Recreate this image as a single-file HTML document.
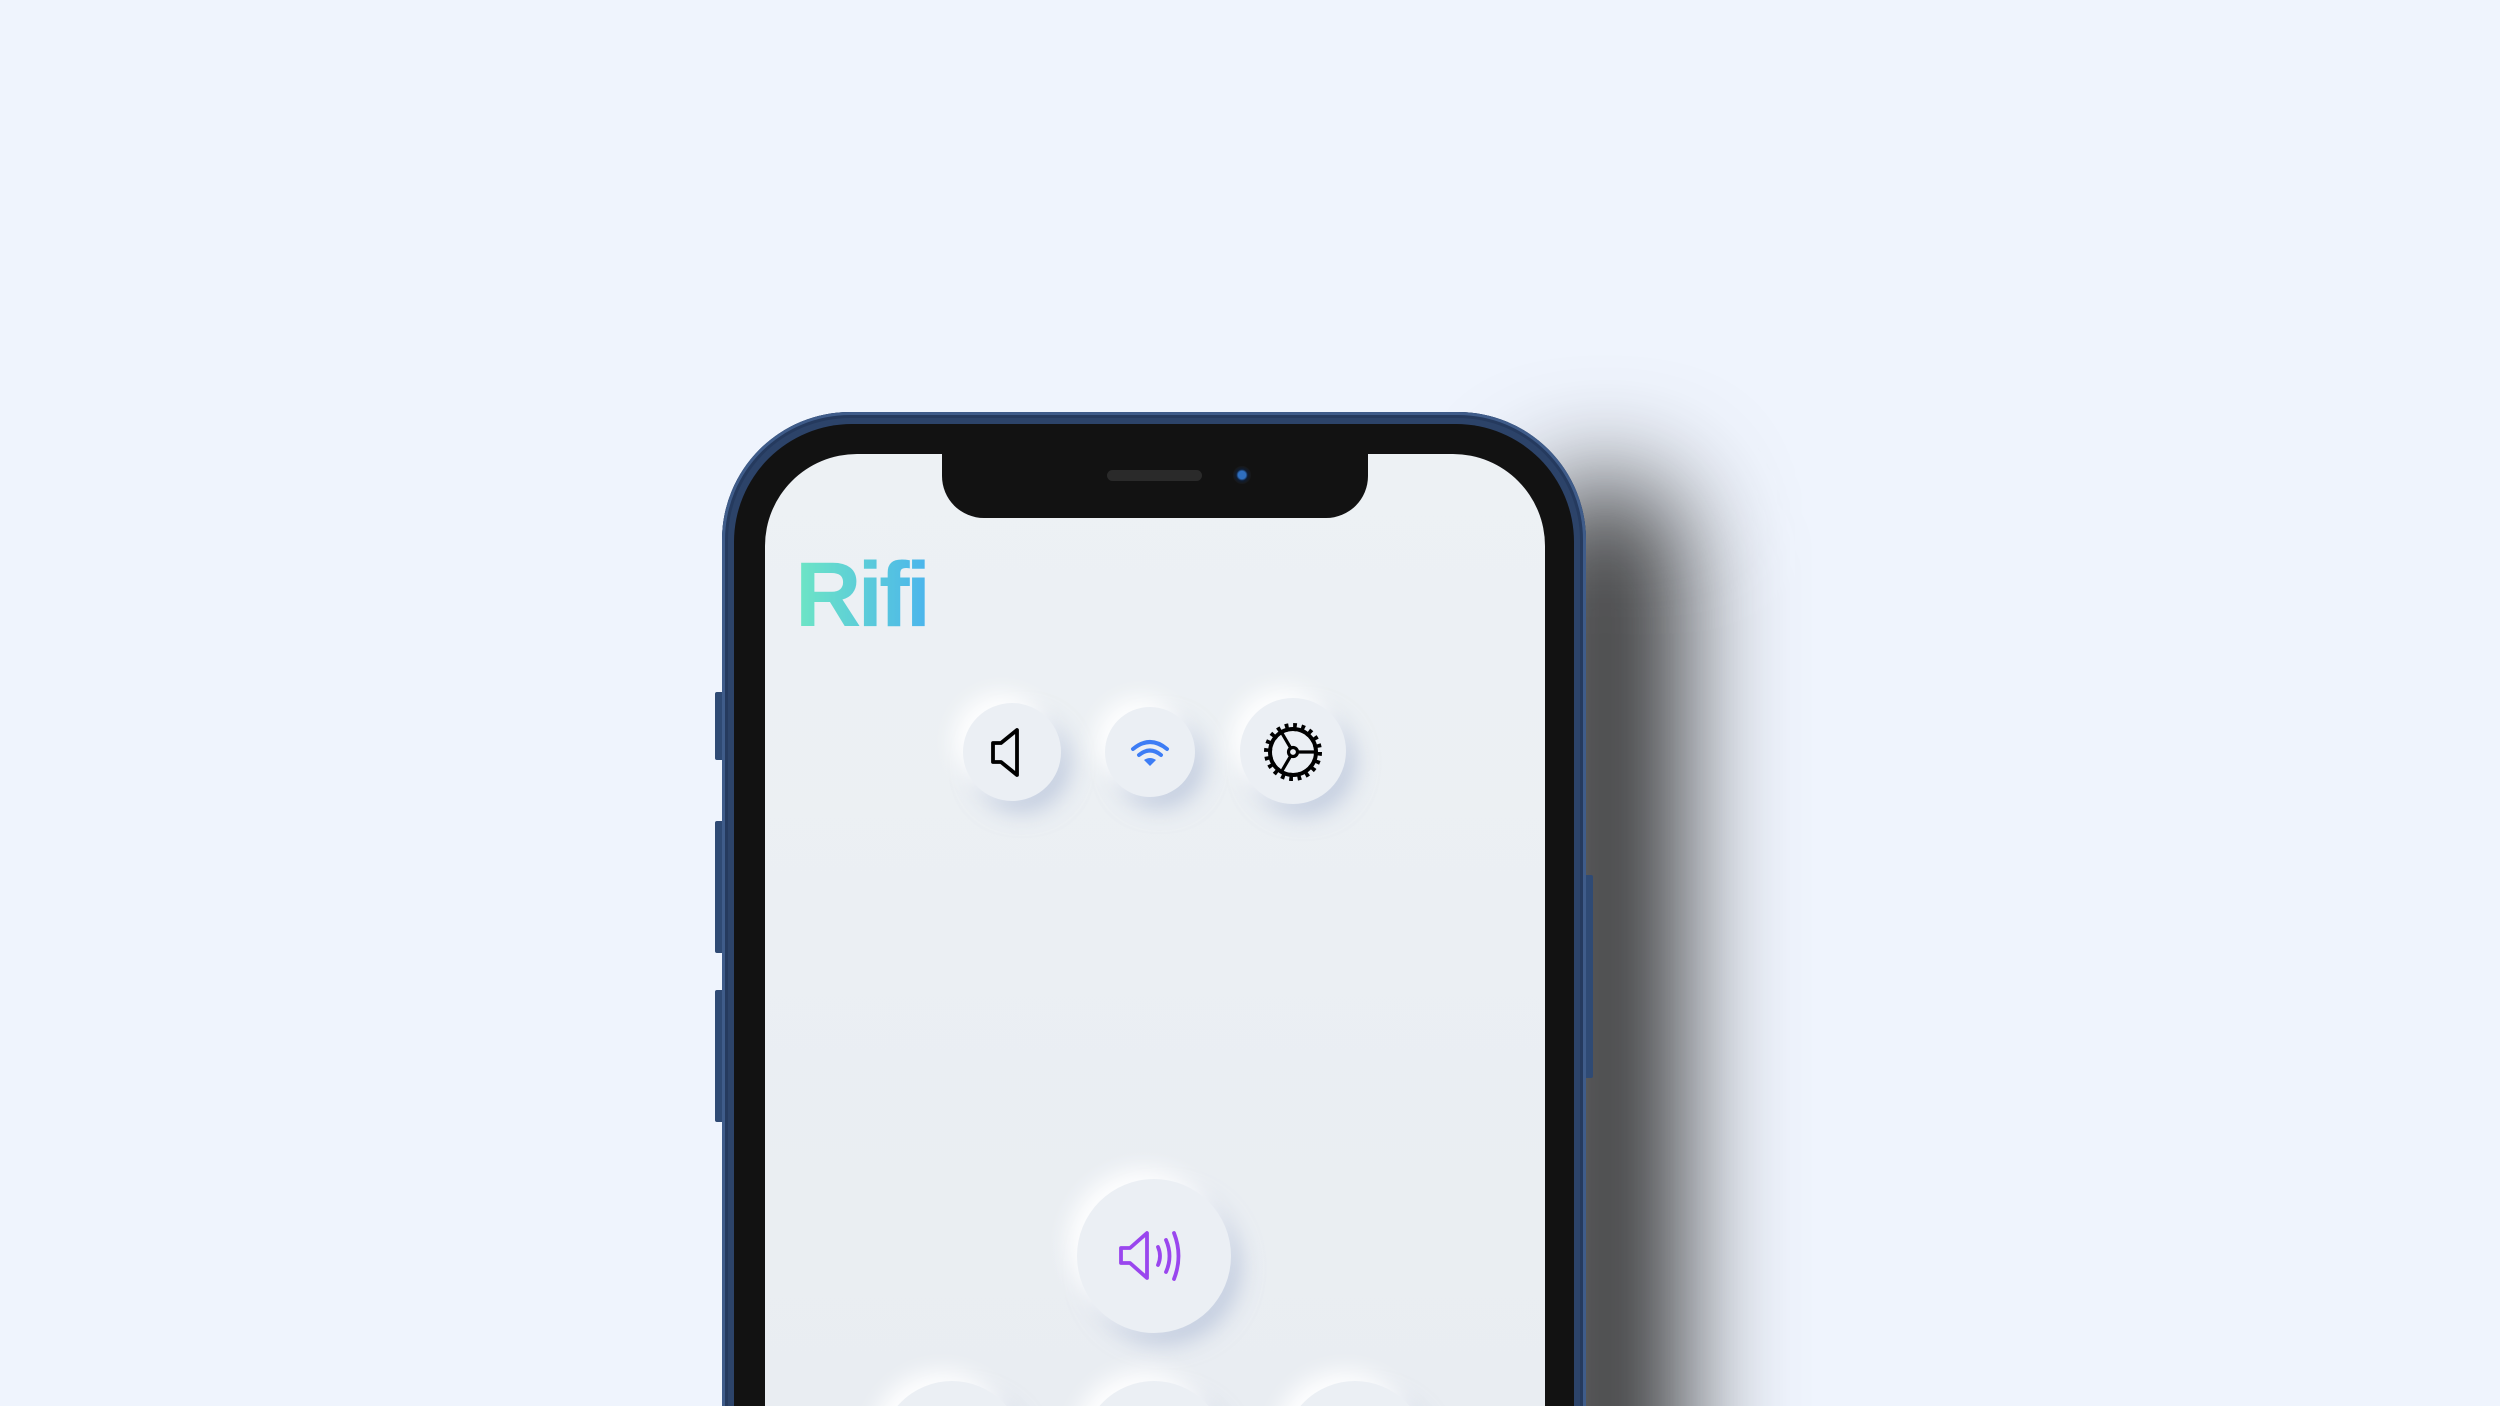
<!DOCTYPE html>
<html><head><meta charset="utf-8"><style>
html,body{margin:0;padding:0;width:2500px;height:1406px;overflow:hidden;background:#eff4fd;font-family:"Liberation Sans",sans-serif}
#wrap{position:relative;width:2500px;height:1406px;overflow:hidden}
.abs{position:absolute}
.shadow{left:1530px;top:480px;width:150px;height:1300px;background:#333;filter:blur(55px);border-radius:70px}
.phone{left:722px;top:412px;width:864px;height:1300px;border-radius:128px;background:#2c4369;box-shadow:inset 0 0 0 3px #3f5c8a, inset 0 0 0 6px #253a5e}
.bezel{left:734px;top:424px;width:840px;height:1280px;border-radius:118px;background:#121212}
.screen{left:765px;top:454px;width:780px;height:1200px;border-radius:92px;background:linear-gradient(180deg,#edf1f4,#e9edf2 80%);overflow:hidden}
.notch{left:942px;top:440px;width:426px;height:78px;background:#121212;border-radius:0 0 42px 42px}
.btn{border-radius:50%;background:#ebeff4;box-shadow:-10px -10px 22px rgba(255,255,255,.95),10px 12px 22px rgba(166,180,210,.55)}
.side{background:#2f4a74;border-radius:2px}
</style></head><body><div id="wrap">
<div class="abs shadow"></div>
<div class="abs side" style="left:715px;top:692px;width:10px;height:68px"></div>
<div class="abs side" style="left:715px;top:821px;width:10px;height:132px"></div>
<div class="abs side" style="left:715px;top:990px;width:10px;height:132px"></div>
<div class="abs side" style="left:1584px;top:875px;width:9px;height:203px"></div>
<div class="abs phone"></div>
<div class="abs bezel"></div>
<div class="abs screen"></div>
<div class="abs notch"></div>
<div class="abs" style="left:1107px;top:470px;width:95px;height:11px;border-radius:6px;background:#2a2a2a"></div>
<div class="abs" style="left:1233px;top:466px;width:18px;height:18px;border-radius:50%;background:radial-gradient(circle,#2f6fbf 0 30%,#0f1d33 45%,#181818 70%)"></div>
<div class="abs" style="left:795px;top:545px;font-size:92px;font-weight:bold;line-height:100px;letter-spacing:-4px;background:linear-gradient(90deg,#6ee6c4,#4bb5ec);-webkit-background-clip:text;background-clip:text;color:transparent">Rifi</div>

<div class="abs btn" style="left:963px;top:703px;width:98px;height:98px"></div>
<div class="abs btn" style="left:1105px;top:707px;width:90px;height:90px"></div>
<div class="abs btn" style="left:1240px;top:698px;width:106px;height:106px"></div>
<div class="abs btn" style="left:1077px;top:1179px;width:154px;height:154px"></div>
<div class="abs btn" style="left:880px;top:1381px;width:144px;height:144px"></div>
<div class="abs btn" style="left:1082px;top:1381px;width:144px;height:144px"></div>
<div class="abs btn" style="left:1283px;top:1381px;width:144px;height:144px"></div>

<svg class="abs" style="left:990px;top:727px" width="40" height="52" viewBox="0 0 40 52"><path d="M3 16 H11 L27 3 V48 L11 35 H3 Z" fill="none" stroke="#000" stroke-width="3.8" stroke-linejoin="round"/></svg>
<svg class="abs" style="left:1130px;top:738px" width="40" height="30" viewBox="0 0 40 30"><g fill="none" stroke="#3d7df5" stroke-width="4" stroke-linecap="round"><path d="M3 11 Q20 -3 37 11"/><path d="M9 17 Q20 8 31 17"/></g><path d="M14 22 Q20 18 26 22 L20 28 Z" fill="#3d7df5"/></svg>
<svg class="abs" style="left:1259px;top:718px" width="68" height="68" viewBox="-34 -34 68 68"><g stroke="#000" fill="none"><circle r="23" stroke-width="4"/><circle r="25" stroke-width="8" stroke-dasharray="3.5 4.35"/><circle r="4.5" stroke-width="3.2"/><path d="M4.5 0 H24 M-2.3 3.9 L-12 20.5 M-2.3 -3.9 L-12 -20.5" stroke-width="3.2"/></g></svg>
<svg class="abs" style="left:1117px;top:1227px" width="76" height="58" viewBox="0 0 76 58"><g fill="none" stroke="#9a46ee" stroke-width="3.8" stroke-linecap="round" stroke-linejoin="round"><path d="M4 21 H13 L30 6 V51 L13 36 H4 Z"/><path d="M41 20 Q45 29 41 38"/><path d="M49 13 Q56 29 49 45"/><path d="M57 6 Q66 29 57 52"/></g></svg>
</div></body></html>
